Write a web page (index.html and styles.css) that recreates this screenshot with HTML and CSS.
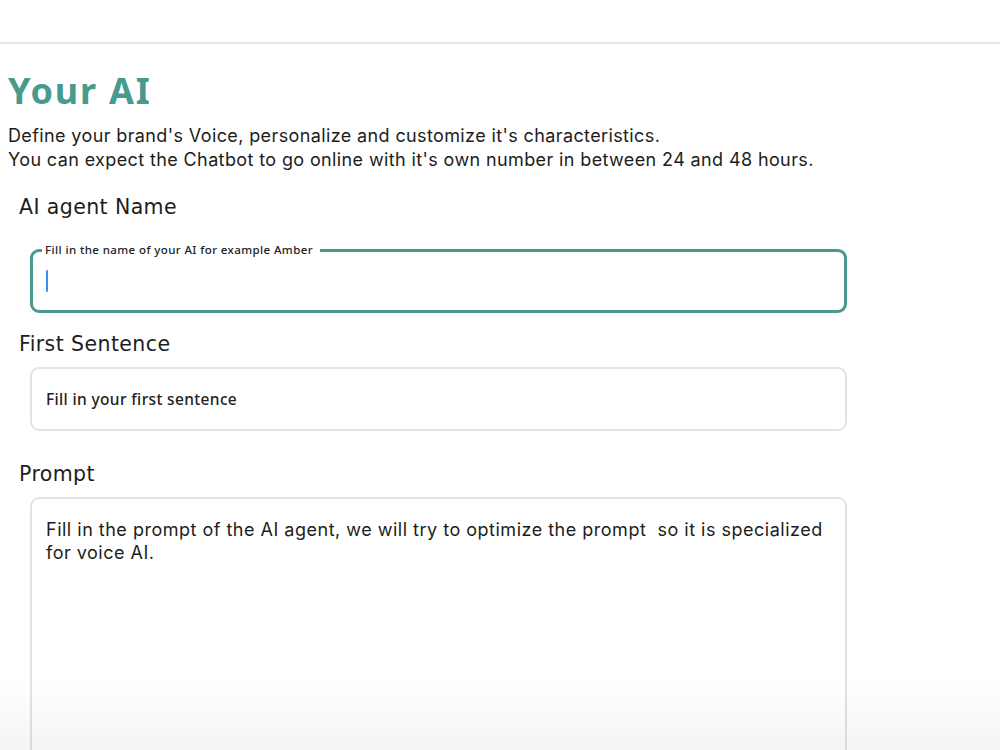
FILE: index.html
```html
<!DOCTYPE html>
<html lang="en">
<head>
<meta charset="utf-8">
<title>Your AI</title>
<link rel="stylesheet" href="styles.css">
</head>
<body>
<header class="topbar"></header>
<main class="page">
  <h1 class="title">Your AI</h1>
  <p class="intro">Define your brand's Voice, personalize and customize it's characteristics.<br>You can expect the Chatbot to go online with it's own number in between 24 and 48 hours.</p>

  <section class="field">
    <h2 class="label">AI agent Name</h2>
    <fieldset class="box box-active">
      <legend class="legend">Fill in the name of your AI for example Amber</legend>
      <span class="caret"></span>
    </fieldset>
  </section>

  <section class="field">
    <h2 class="label">First Sentence</h2>
    <div class="box box-plain">
      <span class="placeholder">Fill in your first sentence</span>
    </div>
  </section>

  <section class="field">
    <h2 class="label">Prompt</h2>
    <div class="box box-area">
      <p class="area-text">Fill in the prompt of the AI agent, we will try to optimize the prompt&nbsp; so it is specialized for voice AI.</p>
    </div>
  </section>
</main>
<div class="fade"></div>
</body>
</html>
```

FILE: styles.css
```css
* { box-sizing: border-box; }
html, body { margin: 0; padding: 0; background: #ffffff; }
body {
  font-family: "Inter", "Noto Sans", sans-serif;
  color: #1f1f23;
  overflow: hidden;
  height: 750px;
}
.topbar {
  height: 44px;
  border-bottom: 2px solid #e3e6ec;
}
.page {
  padding: 0 8px;
}
.title {
  margin: 22px 0 0 0;
  font-family: "Noto Sans", sans-serif;
  font-weight: 700;
  font-size: 36px;
  line-height: 50px;
  color: #479a8e;
  letter-spacing: 1.8px;
}
.intro {
  margin: 8px 0 0 0;
  font-size: 18px;
  line-height: 24px;
  letter-spacing: 0.38px;
  color: #1d1d20;
}
.field { margin: 0; }
.label {
  margin: 0;
  padding-left: 11px;
  font-family: "DejaVu Sans", sans-serif;
  font-weight: 400;
  font-size: 20.5px;
  line-height: 24px;
  letter-spacing: 0.4px;
  color: #1d1d20;
}
.field:nth-of-type(1) .label { margin-top: 23px; }
.field:nth-of-type(2) .label { margin-top: 19px; }
.field:nth-of-type(3) .label { margin-top: 31px; }
.box {
  width: 817px;
  margin-left: 22px;
  border-radius: 9px;
  background: #fff;
}
.box-active {
  margin-top: 25px;
  margin-bottom: 0;
  border: 3px solid #4a998e;
  height: 69px;
  padding: 0 0 0 12px;
  min-width: 0;
}
.legend {
  padding: 0 7px 0 3px;
  margin-left: -3px;
  font-family: "Noto Sans", sans-serif;
  font-size: 11.5px;
  letter-spacing: 0.4px;
  line-height: 12px;
  font-weight: 500;
  color: #222;
}
.caret {
  display: block;
  width: 2px;
  height: 22px;
  margin-top: 14px;
  margin-left: 1px;
  background: #3f8ff0;
  border-radius: 1px;
}
.box-plain {
  margin-top: 11px;
  height: 64px;
  border: 2px solid #e0e4e9;
  display: flex;
  align-items: center;
  padding-left: 14px;
}
.placeholder {
  font-family: "Noto Sans", sans-serif;
  font-size: 15.5px;
  letter-spacing: 0.35px;
  font-weight: 500;
  color: #222;
}
.box-area {
  margin-top: 11px;
  height: 300px;
  border: 2px solid #e0e4e9;
  padding: 19px 6px 0 14px;
}
.area-text {
  margin: 0;
  font-size: 18px;
  letter-spacing: 0.5px;
  line-height: 23px;
  color: #1d1d20;
}
.fade {
  position: fixed;
  left: 0;
  right: 0;
  bottom: 0;
  height: 70px;
  background: linear-gradient(to bottom, rgba(0,0,0,0), rgba(0,0,0,0.045));
  pointer-events: none;
}
```
